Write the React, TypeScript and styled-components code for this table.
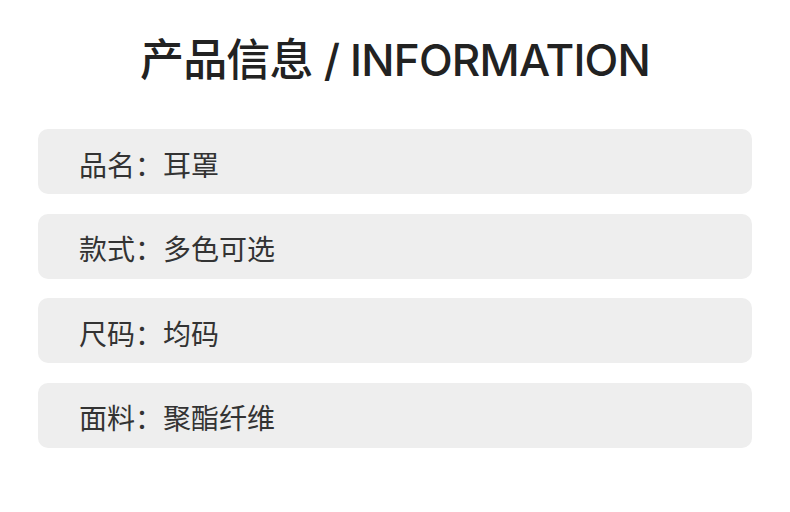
import React from "react";
import styled, { createGlobalStyle } from "styled-components";

const Global = createGlobalStyle`
  html, body { margin: 0; padding: 0; background: #ffffff; }
  body { font-family: "Noto Sans CJK SC", "Noto Sans", sans-serif; }
`;

const Page = styled.div`
  width: 790px;
  height: 512px;
  box-sizing: border-box;
  padding: 30px 38px 0 38px;
  display: flex;
  flex-direction: column;
  align-items: stretch;
`;

const Title = styled.h1`
  margin: 0;
  height: 60px;
  line-height: 60px;
  text-align: center;
  font-family: Inter, "Noto Sans CJK SC", sans-serif;
  font-size: 44px;
  font-weight: 500;
  color: #222222;
  letter-spacing: -0.8px;
`;

const List = styled.div`
  margin-top: 39px;
  display: flex;
  flex-direction: column;
  gap: 19.67px;
`;

const Row = styled.div`
  height: 65px;
  border-radius: 10px;
  background: #eeeeee;
  display: flex;
  align-items: center;
  padding: 4px 0 0 41px;
  box-sizing: border-box;
  font-size: 28px;
  color: #333333;
`;

const rows = [
  ["品名", "耳罩"],
  ["款式", "多色可选"],
  ["尺码", "均码"],
  ["面料", "聚酯纤维"],
];

export default function App() {
  return (
    <>
      <Global />
      <Page>
        <Title>产品信息 / INFORMATION</Title>
        <List>
          {rows.map(([k, v]) => (
            <Row key={k}>
              {k}：{v}
            </Row>
          ))}
        </List>
      </Page>
    </>
  );
}
